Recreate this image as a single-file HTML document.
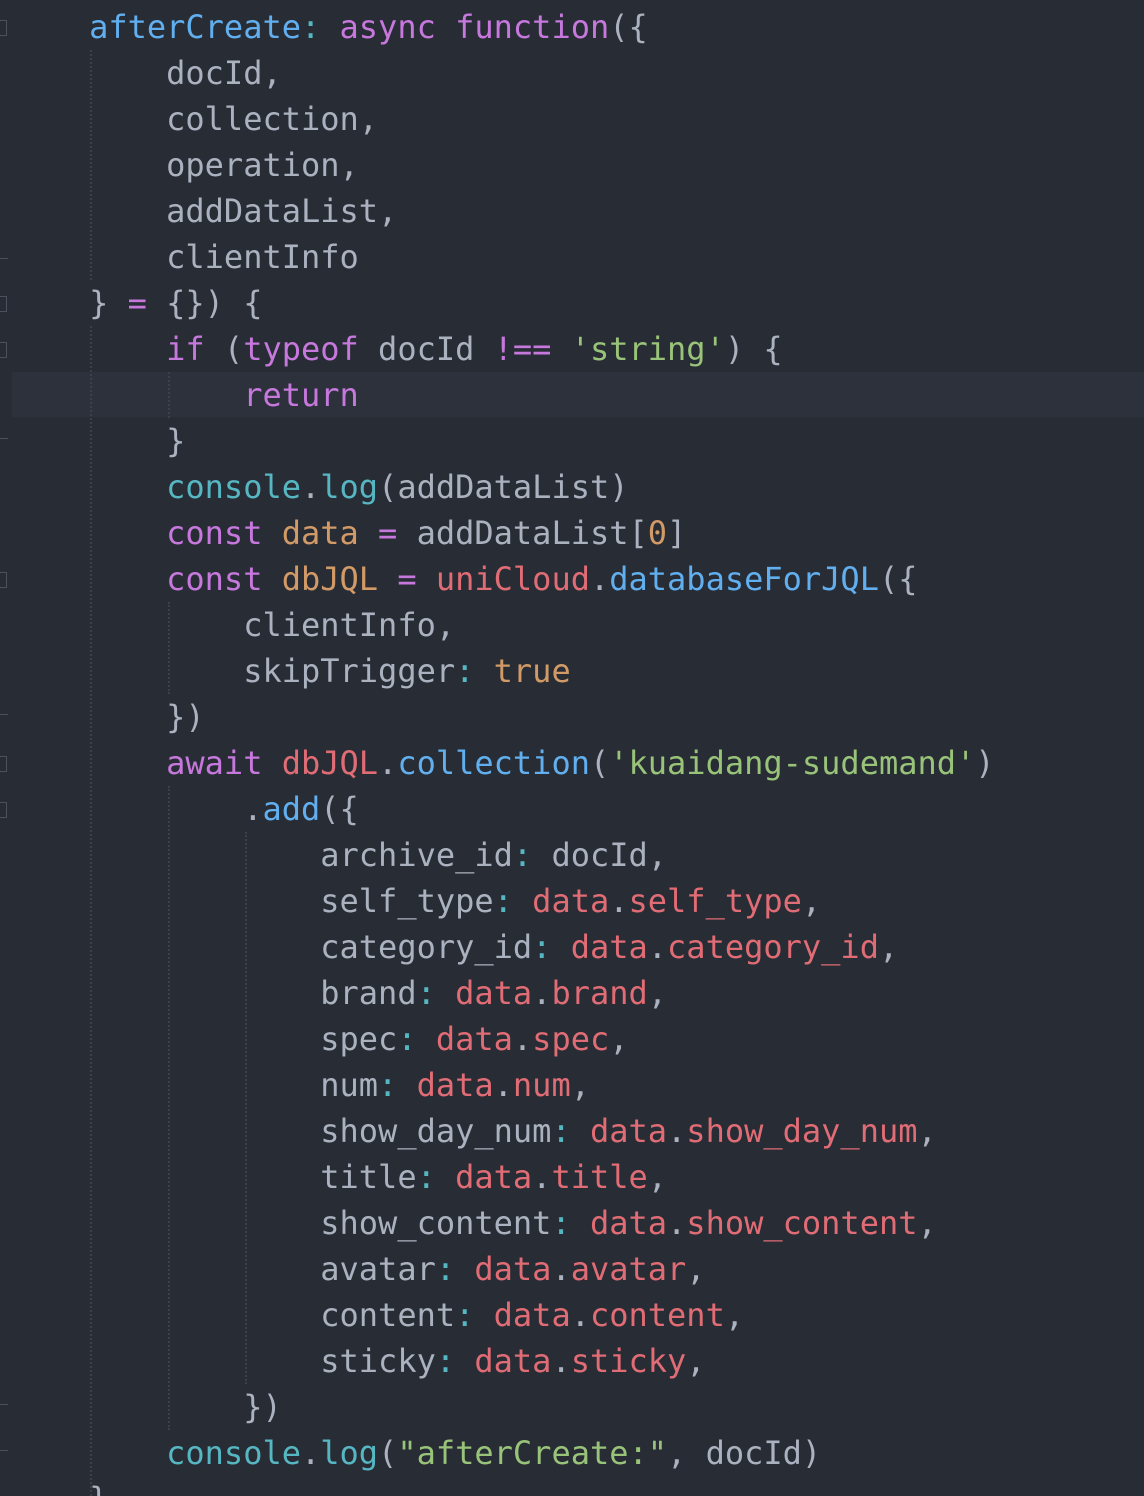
<!DOCTYPE html>
<html><head><meta charset="utf-8"><style>
html,body{margin:0;padding:0;background:#282c35;width:1144px;height:1496px;overflow:hidden}
#c{position:relative;width:1144px;height:1496px;font-family:"DejaVu Sans Mono","Liberation Mono",monospace;font-size:32px;color:#abb2bf}
.l{position:absolute;left:12px;height:46px;line-height:46px;white-space:pre}
.hl{position:absolute;left:12px;right:0;top:372px;height:45px;background:#2d313c}
.g{position:absolute;width:0;border-left:2px dotted #3b404b}
.f{position:absolute;left:0;width:6px;height:14px;border:1px solid #4b515c;border-left:none}
.d{position:absolute;left:0;width:8px;height:1px;background:#4b515c}
.b{color:#61afef}.p{color:#c678dd}.c{color:#56b6c2}.o{color:#d19a66}.s{color:#98c379}.r{color:#e06c75}
</style></head><body><div id="c">
<div class="hl"></div>
<div class="g" style="left:90px;top:50px;height:230px"></div>
<div class="g" style="left:90px;top:326px;height:1170px"></div>
<div class="g" style="left:168px;top:372px;height:46px"></div>
<div class="g" style="left:168px;top:602px;height:92px"></div>
<div class="g" style="left:168px;top:786px;height:644px"></div>
<div class="g" style="left:245px;top:832px;height:552px"></div>
<div class="f" style="top:20px"></div>
<div class="f" style="top:296px"></div>
<div class="f" style="top:342px"></div>
<div class="f" style="top:572px"></div>
<div class="f" style="top:756px"></div>
<div class="f" style="top:802px"></div>
<div class="d" style="top:258px"></div>
<div class="d" style="top:438px"></div>
<div class="d" style="top:714px"></div>
<div class="d" style="top:1404px"></div>
<div class="d" style="top:1450px"></div>
<div class="l" style="top:4px">    <span class="b">afterCreate</span><span class="c">:</span> <span class="p">async</span> <span class="p">function</span>({</div>
<div class="l" style="top:50px">        docId,</div>
<div class="l" style="top:96px">        collection,</div>
<div class="l" style="top:142px">        operation,</div>
<div class="l" style="top:188px">        addDataList,</div>
<div class="l" style="top:234px">        clientInfo</div>
<div class="l" style="top:280px">    } <span class="p">=</span> {}) {</div>
<div class="l" style="top:326px">        <span class="p">if</span> (<span class="p">typeof</span> docId <span class="p">!==</span> <span class="s">'string'</span>) {</div>
<div class="l" style="top:372px">            <span class="p">return</span></div>
<div class="l" style="top:418px">        }</div>
<div class="l" style="top:464px">        <span class="c">console</span>.<span class="c">log</span>(addDataList)</div>
<div class="l" style="top:510px">        <span class="p">const</span> <span class="o">data</span> <span class="p">=</span> addDataList[<span class="o">0</span>]</div>
<div class="l" style="top:556px">        <span class="p">const</span> <span class="o">dbJQL</span> <span class="p">=</span> <span class="r">uniCloud</span>.<span class="b">databaseForJQL</span>({</div>
<div class="l" style="top:602px">            clientInfo,</div>
<div class="l" style="top:648px">            skipTrigger<span class="c">:</span> <span class="o">true</span></div>
<div class="l" style="top:694px">        })</div>
<div class="l" style="top:740px">        <span class="p">await</span> <span class="r">dbJQL</span>.<span class="b">collection</span>(<span class="s">'kuaidang-sudemand'</span>)</div>
<div class="l" style="top:786px">            .<span class="b">add</span>({</div>
<div class="l" style="top:832px">                archive_id<span class="c">:</span> docId,</div>
<div class="l" style="top:878px">                self_type<span class="c">:</span> <span class="r">data</span>.<span class="r">self_type</span>,</div>
<div class="l" style="top:924px">                category_id<span class="c">:</span> <span class="r">data</span>.<span class="r">category_id</span>,</div>
<div class="l" style="top:970px">                brand<span class="c">:</span> <span class="r">data</span>.<span class="r">brand</span>,</div>
<div class="l" style="top:1016px">                spec<span class="c">:</span> <span class="r">data</span>.<span class="r">spec</span>,</div>
<div class="l" style="top:1062px">                num<span class="c">:</span> <span class="r">data</span>.<span class="r">num</span>,</div>
<div class="l" style="top:1108px">                show_day_num<span class="c">:</span> <span class="r">data</span>.<span class="r">show_day_num</span>,</div>
<div class="l" style="top:1154px">                title<span class="c">:</span> <span class="r">data</span>.<span class="r">title</span>,</div>
<div class="l" style="top:1200px">                show_content<span class="c">:</span> <span class="r">data</span>.<span class="r">show_content</span>,</div>
<div class="l" style="top:1246px">                avatar<span class="c">:</span> <span class="r">data</span>.<span class="r">avatar</span>,</div>
<div class="l" style="top:1292px">                content<span class="c">:</span> <span class="r">data</span>.<span class="r">content</span>,</div>
<div class="l" style="top:1338px">                sticky<span class="c">:</span> <span class="r">data</span>.<span class="r">sticky</span>,</div>
<div class="l" style="top:1384px">            })</div>
<div class="l" style="top:1430px">        <span class="c">console</span>.<span class="c">log</span>(<span class="s">"afterCreate:"</span>, docId)</div>
<div class="l" style="top:1476px">    }</div>
</div></body></html>
